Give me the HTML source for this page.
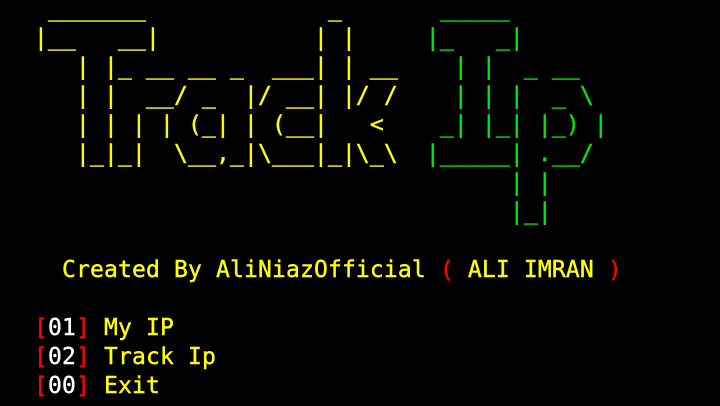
<!DOCTYPE html>
<html><head><meta charset="utf-8"><style>
html,body{margin:0;padding:0;background:#000;width:720px;height:406px;overflow:hidden}
pre{margin:0;position:absolute;left:34px;top:-5px;font-family:"DejaVu Sans Mono","Liberation Mono",monospace;font-size:23px;letter-spacing:0.15px;line-height:29px;color:#ffff00;-webkit-text-stroke:0.4px currentColor}
.g{color:#00e600}.r{color:#ff0000}.w{color:#ffffff}
</style></head><body>
<pre> _______             _      <span class="g"> _____       </span>
|__   __|           | |     <span class="g">|_   _|      </span>
   | |_ __ __ _  ___| | __  <span class="g">  | |  _ __  </span>
   | |  __/ _  |/ __| |/ /  <span class="g">  | | |  _ \ </span>
   | | | | (_| | (__|   &lt;   <span class="g"> _| |_| |_) |</span>
   |_|_|  \__,_|\___|_|\_\  <span class="g">|_____| .__/ </span>
                            <span class="g">      | |    </span>
                            <span class="g">      |_|    </span>

  Created By AliNiazOfficial <span class="r">(</span> ALI IMRAN <span class="r">)</span>

<span class="r">[</span><span class="w">01</span><span class="r">]</span> My IP
<span class="r">[</span><span class="w">02</span><span class="r">]</span> Track Ip
<span class="r">[</span><span class="w">00</span><span class="r">]</span> Exit</pre>
</body></html>
